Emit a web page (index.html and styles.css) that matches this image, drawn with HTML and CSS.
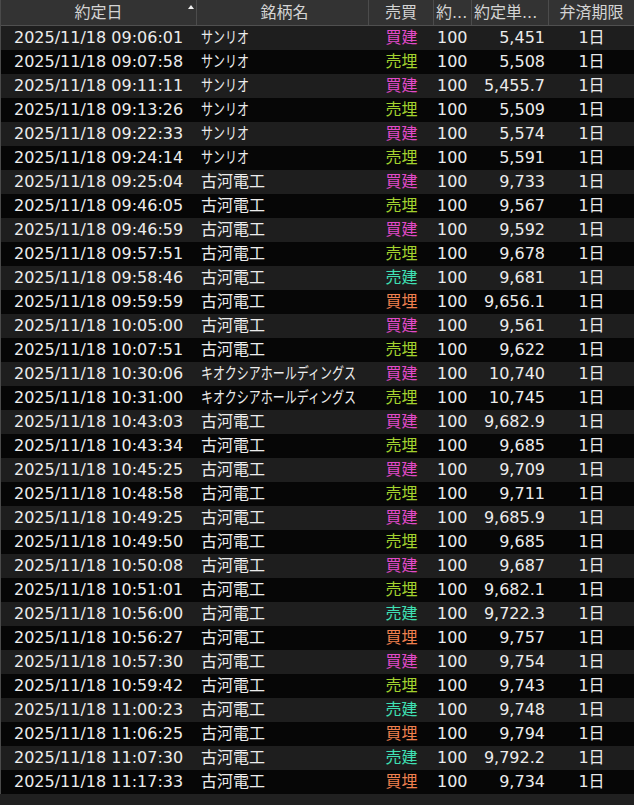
FILE: index.html
```html
<!DOCTYPE html>
<html lang="ja">
<head>
<meta charset="utf-8">
<title>約定一覧</title>
<link rel="stylesheet" href="styles.css">
</head>
<body>
<div class="grid">
  <div class="row head">
    <div class="c date sorted">約定日<span class="arrow"></span></div>
    <div class="c name">銘柄名</div>
    <div class="c side">売買</div>
    <div class="c qty">約...</div>
    <div class="c price">約定単...</div>
    <div class="c term">弁済期限</div>
  </div>
  <div class="row"><div class="c date">2025/11/18 09:06:01</div><div class="c name"><span class="kana">サンリオ</span></div><div class="c side buy-open">買建</div><div class="c qty">100</div><div class="c price">5,451</div><div class="c term">1日</div></div>
  <div class="row"><div class="c date">2025/11/18 09:07:58</div><div class="c name"><span class="kana">サンリオ</span></div><div class="c side sell-close">売埋</div><div class="c qty">100</div><div class="c price">5,508</div><div class="c term">1日</div></div>
  <div class="row"><div class="c date">2025/11/18 09:11:11</div><div class="c name"><span class="kana">サンリオ</span></div><div class="c side buy-open">買建</div><div class="c qty">100</div><div class="c price">5,455.7</div><div class="c term">1日</div></div>
  <div class="row"><div class="c date">2025/11/18 09:13:26</div><div class="c name"><span class="kana">サンリオ</span></div><div class="c side sell-close">売埋</div><div class="c qty">100</div><div class="c price">5,509</div><div class="c term">1日</div></div>
  <div class="row"><div class="c date">2025/11/18 09:22:33</div><div class="c name"><span class="kana">サンリオ</span></div><div class="c side buy-open">買建</div><div class="c qty">100</div><div class="c price">5,574</div><div class="c term">1日</div></div>
  <div class="row"><div class="c date">2025/11/18 09:24:14</div><div class="c name"><span class="kana">サンリオ</span></div><div class="c side sell-close">売埋</div><div class="c qty">100</div><div class="c price">5,591</div><div class="c term">1日</div></div>
  <div class="row"><div class="c date">2025/11/18 09:25:04</div><div class="c name">古河電工</div><div class="c side buy-open">買建</div><div class="c qty">100</div><div class="c price">9,733</div><div class="c term">1日</div></div>
  <div class="row"><div class="c date">2025/11/18 09:46:05</div><div class="c name">古河電工</div><div class="c side sell-close">売埋</div><div class="c qty">100</div><div class="c price">9,567</div><div class="c term">1日</div></div>
  <div class="row"><div class="c date">2025/11/18 09:46:59</div><div class="c name">古河電工</div><div class="c side buy-open">買建</div><div class="c qty">100</div><div class="c price">9,592</div><div class="c term">1日</div></div>
  <div class="row"><div class="c date">2025/11/18 09:57:51</div><div class="c name">古河電工</div><div class="c side sell-close">売埋</div><div class="c qty">100</div><div class="c price">9,678</div><div class="c term">1日</div></div>
  <div class="row"><div class="c date">2025/11/18 09:58:46</div><div class="c name">古河電工</div><div class="c side sell-open">売建</div><div class="c qty">100</div><div class="c price">9,681</div><div class="c term">1日</div></div>
  <div class="row"><div class="c date">2025/11/18 09:59:59</div><div class="c name">古河電工</div><div class="c side buy-close">買埋</div><div class="c qty">100</div><div class="c price">9,656.1</div><div class="c term">1日</div></div>
  <div class="row"><div class="c date">2025/11/18 10:05:00</div><div class="c name">古河電工</div><div class="c side buy-open">買建</div><div class="c qty">100</div><div class="c price">9,561</div><div class="c term">1日</div></div>
  <div class="row"><div class="c date">2025/11/18 10:07:51</div><div class="c name">古河電工</div><div class="c side sell-close">売埋</div><div class="c qty">100</div><div class="c price">9,622</div><div class="c term">1日</div></div>
  <div class="row"><div class="c date">2025/11/18 10:30:06</div><div class="c name"><span class="kana">キオクシアホールディングス</span></div><div class="c side buy-open">買建</div><div class="c qty">100</div><div class="c price">10,740</div><div class="c term">1日</div></div>
  <div class="row"><div class="c date">2025/11/18 10:31:00</div><div class="c name"><span class="kana">キオクシアホールディングス</span></div><div class="c side sell-close">売埋</div><div class="c qty">100</div><div class="c price">10,745</div><div class="c term">1日</div></div>
  <div class="row"><div class="c date">2025/11/18 10:43:03</div><div class="c name">古河電工</div><div class="c side buy-open">買建</div><div class="c qty">100</div><div class="c price">9,682.9</div><div class="c term">1日</div></div>
  <div class="row"><div class="c date">2025/11/18 10:43:34</div><div class="c name">古河電工</div><div class="c side sell-close">売埋</div><div class="c qty">100</div><div class="c price">9,685</div><div class="c term">1日</div></div>
  <div class="row"><div class="c date">2025/11/18 10:45:25</div><div class="c name">古河電工</div><div class="c side buy-open">買建</div><div class="c qty">100</div><div class="c price">9,709</div><div class="c term">1日</div></div>
  <div class="row"><div class="c date">2025/11/18 10:48:58</div><div class="c name">古河電工</div><div class="c side sell-close">売埋</div><div class="c qty">100</div><div class="c price">9,711</div><div class="c term">1日</div></div>
  <div class="row"><div class="c date">2025/11/18 10:49:25</div><div class="c name">古河電工</div><div class="c side buy-open">買建</div><div class="c qty">100</div><div class="c price">9,685.9</div><div class="c term">1日</div></div>
  <div class="row"><div class="c date">2025/11/18 10:49:50</div><div class="c name">古河電工</div><div class="c side sell-close">売埋</div><div class="c qty">100</div><div class="c price">9,685</div><div class="c term">1日</div></div>
  <div class="row"><div class="c date">2025/11/18 10:50:08</div><div class="c name">古河電工</div><div class="c side buy-open">買建</div><div class="c qty">100</div><div class="c price">9,687</div><div class="c term">1日</div></div>
  <div class="row"><div class="c date">2025/11/18 10:51:01</div><div class="c name">古河電工</div><div class="c side sell-close">売埋</div><div class="c qty">100</div><div class="c price">9,682.1</div><div class="c term">1日</div></div>
  <div class="row"><div class="c date">2025/11/18 10:56:00</div><div class="c name">古河電工</div><div class="c side sell-open">売建</div><div class="c qty">100</div><div class="c price">9,722.3</div><div class="c term">1日</div></div>
  <div class="row"><div class="c date">2025/11/18 10:56:27</div><div class="c name">古河電工</div><div class="c side buy-close">買埋</div><div class="c qty">100</div><div class="c price">9,757</div><div class="c term">1日</div></div>
  <div class="row"><div class="c date">2025/11/18 10:57:30</div><div class="c name">古河電工</div><div class="c side buy-open">買建</div><div class="c qty">100</div><div class="c price">9,754</div><div class="c term">1日</div></div>
  <div class="row"><div class="c date">2025/11/18 10:59:42</div><div class="c name">古河電工</div><div class="c side sell-close">売埋</div><div class="c qty">100</div><div class="c price">9,743</div><div class="c term">1日</div></div>
  <div class="row"><div class="c date">2025/11/18 11:00:23</div><div class="c name">古河電工</div><div class="c side sell-open">売建</div><div class="c qty">100</div><div class="c price">9,748</div><div class="c term">1日</div></div>
  <div class="row"><div class="c date">2025/11/18 11:06:25</div><div class="c name">古河電工</div><div class="c side buy-close">買埋</div><div class="c qty">100</div><div class="c price">9,794</div><div class="c term">1日</div></div>
  <div class="row"><div class="c date">2025/11/18 11:07:30</div><div class="c name">古河電工</div><div class="c side sell-open">売建</div><div class="c qty">100</div><div class="c price">9,792.2</div><div class="c term">1日</div></div>
  <div class="row"><div class="c date">2025/11/18 11:17:33</div><div class="c name">古河電工</div><div class="c side buy-close">買埋</div><div class="c qty">100</div><div class="c price">9,734</div><div class="c term">1日</div></div>
</div>
</body>
</html>
```
FILE: styles.css
```css
html, body {
  margin: 0;
  padding: 0;
  background: #202020;
  height: 100%;
}
body {
  font-family: "DejaVu Sans", "Noto Sans CJK JP", sans-serif;
  font-size: 16px;
  color: #ececec;
}
.grid {
  border-left: 1px solid #4a4a4a;
  width: 633px;
}
.row {
  display: grid;
  grid-template-columns: 196px 172px 65px 38px 77px 85px;
  height: 24px;
  line-height: 24px;
  white-space: nowrap;
}
.row:nth-child(even) { background: #1e1e1e; }
.row:nth-child(odd) { background: #060606; }
.row.head {
  background: #333333;
  height: 25px;
  line-height: 25px;
  border-bottom: 1px solid #505050;
  color: #d4d4d4;
}
.c { overflow: hidden; }
.head .c {
  border-right: 1px solid #4c4c4c;
  text-align: center;
  position: relative;
}
.head .c:last-child { border-right: 0; }
.head .qty, .head .price { text-align: left; padding-left: 2px; }
.date { padding-left: 13px; }
.head .date { padding-left: 0; }
.name { padding-left: 4px; }
.kana {
  display: inline-block;
  transform: scaleX(0.75);
  transform-origin: 0 50%;
}
.side { text-align: center; }
.qty { padding-left: 3px; }
.price { text-align: right; padding-right: 4px; }
.term { text-align: center; }
.arrow {
  position: absolute;
  right: 2px;
  top: 5px;
  width: 0;
  height: 0;
  border-left: 3.5px solid transparent;
  border-right: 3.5px solid transparent;
  border-bottom: 4px solid #f0f0f0;
}
.buy-open { color: #e24ac9; }
.sell-close { color: #a3d22e; }
.sell-open { color: #3fe0b4; }
.buy-close { color: #f0804f; }
```
